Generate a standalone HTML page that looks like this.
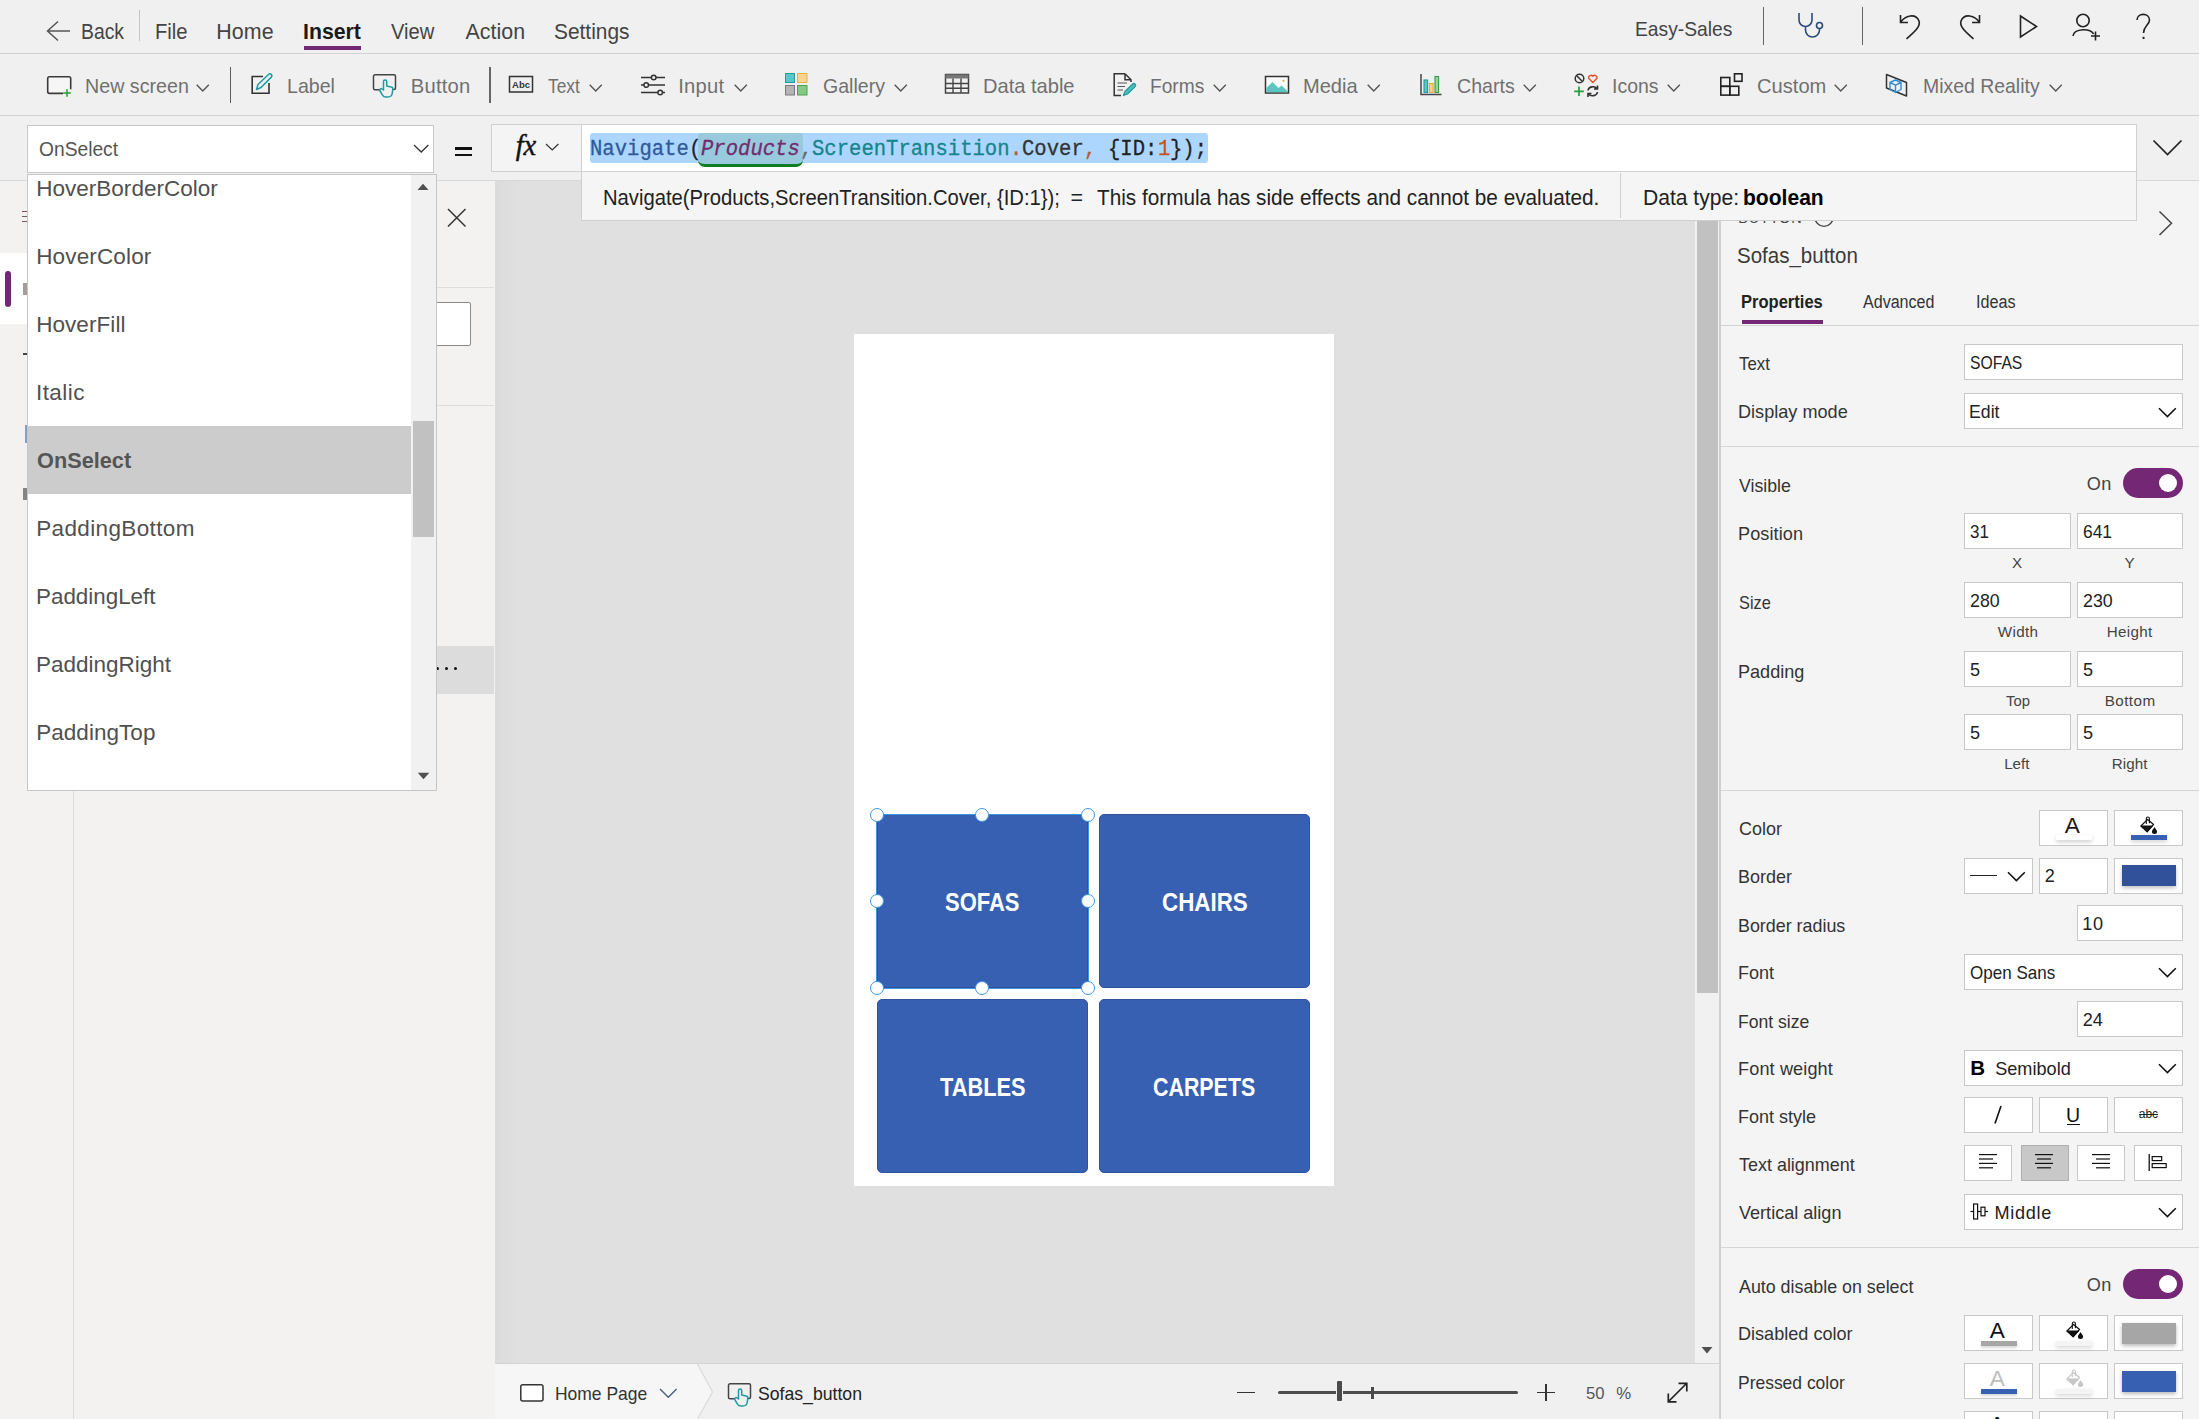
<!DOCTYPE html>
<html lang="en"><head><meta charset="utf-8"><title>Easy-Sales - Power Apps</title>
<style>
html,body{margin:0;padding:0;}
body{width:2199px;height:1419px;overflow:hidden;background:#f3f2f1;position:relative;font-family:'Liberation Sans', sans-serif;}
.a{position:absolute;box-sizing:border-box;}
.t{position:absolute;white-space:pre;line-height:1;}

</style></head><body>
<div class="a" style="left:495px;top:181px;width:1225px;height:1182px;background:#e0e0e0;"></div>
<div class="a" style="left:495px;top:181px;width:26px;height:1182px;background:linear-gradient(90deg,#dbdbdb,#e0e0e0);"></div>
<div class="a" style="left:854px;top:334px;width:480px;height:852px;background:#ffffff;"></div>
<div class="a" style="left:877px;top:814px;width:211px;height:174px;background:#3860b2;border-radius:5px;border:1px solid #2f539c;"></div>
<span class="t" style="left:945.37px;top:890.00px;font-family:'Liberation Sans', sans-serif;font-size:25px;font-weight:700;color:#fff;letter-spacing:0.000px;transform:scaleX(0.8790);transform-origin:0 0;">SOFAS</span>
<div class="a" style="left:1099px;top:814px;width:211px;height:174px;background:#3860b2;border-radius:5px;border:1px solid #2f539c;"></div>
<span class="t" style="left:1161.58px;top:890.00px;font-family:'Liberation Sans', sans-serif;font-size:25px;font-weight:700;color:#fff;letter-spacing:0.000px;transform:scaleX(0.8951);transform-origin:0 0;">CHAIRS</span>
<div class="a" style="left:877px;top:998.5px;width:211px;height:174px;background:#3860b2;border-radius:5px;border:1px solid #2f539c;"></div>
<span class="t" style="left:940.01px;top:1075.00px;font-family:'Liberation Sans', sans-serif;font-size:25px;font-weight:700;color:#fff;letter-spacing:0.000px;transform:scaleX(0.8720);transform-origin:0 0;">TABLES</span>
<div class="a" style="left:1099px;top:998.5px;width:211px;height:174px;background:#3860b2;border-radius:5px;border:1px solid #2f539c;"></div>
<span class="t" style="left:1153.37px;top:1075.00px;font-family:'Liberation Sans', sans-serif;font-size:25px;font-weight:700;color:#fff;letter-spacing:0.000px;transform:scaleX(0.8556);transform-origin:0 0;">CARPETS</span>
<div class="a" style="left:876px;top:813.5px;width:212.5px;height:175px;border:1px solid #3a96dd;background:transparent;"></div>
<div class="a" style="left:870px;top:807.5px;width:14px;height:14px;background:#fff;border:1px solid #3a96dd;border-radius:7px;"></div>
<div class="a" style="left:870px;top:894px;width:14px;height:14px;background:#fff;border:1px solid #3a96dd;border-radius:7px;"></div>
<div class="a" style="left:870px;top:981px;width:14px;height:14px;background:#fff;border:1px solid #3a96dd;border-radius:7px;"></div>
<div class="a" style="left:975px;top:807.5px;width:14px;height:14px;background:#fff;border:1px solid #3a96dd;border-radius:7px;"></div>
<div class="a" style="left:975px;top:981px;width:14px;height:14px;background:#fff;border:1px solid #3a96dd;border-radius:7px;"></div>
<div class="a" style="left:1080.5px;top:807.5px;width:14px;height:14px;background:#fff;border:1px solid #3a96dd;border-radius:7px;"></div>
<div class="a" style="left:1080.5px;top:894px;width:14px;height:14px;background:#fff;border:1px solid #3a96dd;border-radius:7px;"></div>
<div class="a" style="left:1080.5px;top:981px;width:14px;height:14px;background:#fff;border:1px solid #3a96dd;border-radius:7px;"></div>
<div class="a" style="left:1695px;top:181px;width:24px;height:1182px;background:#f1f1f1;"></div>
<div class="a" style="left:1697.4px;top:221px;width:20.4px;height:772px;background:#c1c1c1;"></div>
<svg class="a" style="left:1701px;top:1346px;" width="13" height="9" viewBox="0 0 13 9"><path d="M0.5 1 H11.5 L6 7.5 Z" fill="#505050"/></svg>
<div class="a" style="left:0px;top:181px;width:495px;height:1238px;background:#f3f2f1;"></div>
<div class="a" style="left:73px;top:181px;width:1px;height:1238px;background:#dcdcdc;"></div>
<div class="a" style="left:0px;top:253px;width:27px;height:71px;background:#ffffff;"></div>
<div class="a" style="left:5px;top:271px;width:5.5px;height:36px;background:#742774;border-radius:3px;"></div>
<svg class="a" style="left:446px;top:207px;" width="22" height="22" viewBox="0 0 22 22"><path d="M2 2 L19.5 19.5 M19.5 2 L2 19.5" fill="none" stroke="#333" stroke-width="1.5"/></svg>
<div class="a" style="left:437px;top:287px;width:57px;height:1px;background:#dddddd;"></div>
<div class="a" style="left:420px;top:302px;width:50.5px;height:44px;background:#fff;border:1px solid #8a8a8a;border-radius:2px;"></div>
<div class="a" style="left:437px;top:405px;width:57px;height:1px;background:#dddddd;"></div>
<div class="a" style="left:437px;top:646px;width:57px;height:47.7px;background:#dcdcdc;"></div>
<div class="a" style="left:435.5px;top:666.5px;width:3px;height:3px;background:#111;border-radius:1.5px;"></div>
<div class="a" style="left:444.5px;top:666.5px;width:3px;height:3px;background:#111;border-radius:1.5px;"></div>
<div class="a" style="left:453.5px;top:666.5px;width:3px;height:3px;background:#111;border-radius:1.5px;"></div>
<div class="a" style="left:22px;top:211px;width:5px;height:1.2px;background:#7a5a5a;"></div>
<div class="a" style="left:22px;top:216px;width:5px;height:1.2px;background:#7a5a5a;"></div>
<div class="a" style="left:22px;top:221px;width:5px;height:1.2px;background:#7a5a5a;"></div>
<div class="a" style="left:23px;top:283px;width:4px;height:12px;background:#6a5a5a;opacity:.6;"></div>
<div class="a" style="left:23px;top:353px;width:4px;height:1.5px;background:#444;"></div>
<div class="a" style="left:23px;top:488px;width:4px;height:12px;background:#555;opacity:.7;"></div>
<div class="a" style="left:25px;top:425px;width:2px;height:18px;background:#4a80c0;opacity:.7;"></div>
<div class="a" style="left:1719px;top:181px;width:480px;height:1238px;background:#f4f4f4;border-left:2px solid #cfcfcf;"></div>
<span class="t" style="left:1738.31px;top:211.00px;font-family:'Liberation Sans', sans-serif;font-size:14.5px;font-weight:400;color:#444;letter-spacing:0.802px;">BUTTON</span>
<svg class="a" style="left:1813.3px;top:205.6px;" width="22" height="22" viewBox="0 0 22 22"><circle cx="11" cy="11" r="9.3" fill="none" stroke="#444" stroke-width="1.3"/></svg>
<svg class="a" style="left:2158px;top:210px;" width="16" height="27" viewBox="0 0 16 27"><path d="M1.5 1.5 L13.5 13.2 L1.5 25" fill="none" stroke="#444" stroke-width="1.5"/></svg>
<span class="t" style="left:1737.27px;top:245.00px;font-family:'Liberation Sans', sans-serif;font-size:21.2px;font-weight:400;color:#3a3a3a;letter-spacing:0.000px;transform:scaleX(0.9679);transform-origin:0 0;">Sofas_button</span>
<span class="t" style="left:1741.29px;top:293.00px;font-family:'Liberation Sans', sans-serif;font-size:18px;font-weight:700;color:#222;letter-spacing:0.000px;transform:scaleX(0.9184);transform-origin:0 0;">Properties</span>
<div class="a" style="left:1742px;top:320px;width:81px;height:4px;background:#742774;"></div>
<span class="t" style="left:1862.57px;top:293.00px;font-family:'Liberation Sans', sans-serif;font-size:18px;font-weight:400;color:#333;letter-spacing:0.000px;transform:scaleX(0.8926);transform-origin:0 0;">Advanced</span>
<span class="t" style="left:1976.31px;top:293.00px;font-family:'Liberation Sans', sans-serif;font-size:18px;font-weight:400;color:#333;letter-spacing:0.000px;transform:scaleX(0.8985);transform-origin:0 0;">Ideas</span>
<div class="a" style="left:1721px;top:324.5px;width:478px;height:1.3px;background:#d2d2d2;"></div>
<span class="t" style="left:1739.12px;top:355.00px;font-family:'Liberation Sans', sans-serif;font-size:18.1px;font-weight:400;color:#333333;letter-spacing:0.000px;transform:scaleX(0.9281);transform-origin:0 0;">Text</span>
<div class="a" style="left:1964px;top:344px;width:219px;height:36px;background:#fff;border:1px solid #c8c8c8;"></div>
<span class="t" style="left:1969.89px;top:354.00px;font-family:'Liberation Sans', sans-serif;font-size:18.1px;font-weight:400;color:#222;letter-spacing:0.000px;transform:scaleX(0.8673);transform-origin:0 0;">SOFAS</span>
<span class="t" style="left:1738.02px;top:403.00px;font-family:'Liberation Sans', sans-serif;font-size:18.1px;font-weight:400;color:#333333;letter-spacing:0.006px;">Display mode</span>
<div class="a" style="left:1964px;top:393px;width:219px;height:36px;background:#fff;border:1px solid #c8c8c8;"></div>
<span class="t" style="left:1969.15px;top:403.00px;font-family:'Liberation Sans', sans-serif;font-size:18.1px;font-weight:400;color:#222;letter-spacing:0.000px;transform:scaleX(0.9773);transform-origin:0 0;">Edit</span>
<svg class="a" style="left:2157.5px;top:406.5px;" width="20" height="12" viewBox="0 0 20 12"><path d="M1 1.2 L9.4 9.6 L17.8 1.2" fill="none" stroke="#111" stroke-width="1.5"/></svg>
<div class="a" style="left:1721px;top:446px;width:478px;height:1.2px;background:#d6d6d6;"></div>
<span class="t" style="left:1739.42px;top:477.00px;font-family:'Liberation Sans', sans-serif;font-size:18.1px;font-weight:400;color:#333333;letter-spacing:0.000px;transform:scaleX(0.9770);transform-origin:0 0;">Visible</span>
<span class="t" style="left:2086.74px;top:475.00px;font-family:'Liberation Sans', sans-serif;font-size:18.1px;font-weight:400;color:#444;letter-spacing:0.492px;">On</span>
<div class="a" style="left:2123.2px;top:468.4px;width:59.5px;height:29.6px;background:#742774;border-radius:15px;"></div>
<div class="a" style="left:2159.2px;top:474.4px;width:17.6px;height:17.6px;background:#fff;border-radius:9px;"></div>
<span class="t" style="left:1738.02px;top:525.00px;font-family:'Liberation Sans', sans-serif;font-size:18.1px;font-weight:400;color:#333333;letter-spacing:0.098px;">Position</span>
<div class="a" style="left:1964px;top:513px;width:107px;height:36px;background:#fff;border:1px solid #c8c8c8;"></div>
<span class="t" style="left:1969.95px;top:523.00px;font-family:'Liberation Sans', sans-serif;font-size:18.1px;font-weight:400;color:#222;letter-spacing:0.000px;transform:scaleX(0.9371);transform-origin:0 0;">31</span>
<div class="a" style="left:2077px;top:513px;width:106px;height:36px;background:#fff;border:1px solid #c8c8c8;"></div>
<span class="t" style="left:2082.72px;top:523.00px;font-family:'Liberation Sans', sans-serif;font-size:18.1px;font-weight:400;color:#222;letter-spacing:0.000px;transform:scaleX(0.9613);transform-origin:0 0;">641</span>
<span class="t" style="left:2012.12px;top:555.00px;font-family:'Liberation Sans', sans-serif;font-size:15.2px;font-weight:400;color:#444;letter-spacing:0.000px;">X</span>
<span class="t" style="left:2124.53px;top:555.00px;font-family:'Liberation Sans', sans-serif;font-size:15.2px;font-weight:400;color:#444;letter-spacing:0.000px;">Y</span>
<span class="t" style="left:1738.76px;top:594.00px;font-family:'Liberation Sans', sans-serif;font-size:18.1px;font-weight:400;color:#333333;letter-spacing:0.000px;transform:scaleX(0.9024);transform-origin:0 0;">Size</span>
<div class="a" style="left:1964px;top:582px;width:107px;height:36px;background:#fff;border:1px solid #c8c8c8;"></div>
<span class="t" style="left:1969.71px;top:592.00px;font-family:'Liberation Sans', sans-serif;font-size:18.1px;font-weight:400;color:#222;letter-spacing:0.000px;transform:scaleX(0.9830);transform-origin:0 0;">280</span>
<div class="a" style="left:2077px;top:582px;width:106px;height:36px;background:#fff;border:1px solid #c8c8c8;"></div>
<span class="t" style="left:2082.71px;top:592.00px;font-family:'Liberation Sans', sans-serif;font-size:18.1px;font-weight:400;color:#222;letter-spacing:0.000px;transform:scaleX(0.9830);transform-origin:0 0;">230</span>
<span class="t" style="left:1997.83px;top:624.00px;font-family:'Liberation Sans', sans-serif;font-size:15.2px;font-weight:400;color:#444;letter-spacing:0.306px;">Width</span>
<span class="t" style="left:2106.75px;top:624.00px;font-family:'Liberation Sans', sans-serif;font-size:15.2px;font-weight:400;color:#444;letter-spacing:0.290px;">Height</span>
<span class="t" style="left:1738.02px;top:663.00px;font-family:'Liberation Sans', sans-serif;font-size:18.1px;font-weight:400;color:#333333;letter-spacing:0.000px;transform:scaleX(0.9991);transform-origin:0 0;">Padding</span>
<div class="a" style="left:1964px;top:651px;width:107px;height:36px;background:#fff;border:1px solid #c8c8c8;"></div>
<span class="t" style="left:1969.88px;top:661.00px;font-family:'Liberation Sans', sans-serif;font-size:18.1px;font-weight:400;color:#222;letter-spacing:0.000px;">5</span>
<div class="a" style="left:2077px;top:651px;width:106px;height:36px;background:#fff;border:1px solid #c8c8c8;"></div>
<span class="t" style="left:2082.88px;top:661.00px;font-family:'Liberation Sans', sans-serif;font-size:18.1px;font-weight:400;color:#222;letter-spacing:0.000px;">5</span>
<span class="t" style="left:2005.67px;top:693.00px;font-family:'Liberation Sans', sans-serif;font-size:15.2px;font-weight:400;color:#444;letter-spacing:0.000px;transform:scaleX(0.9779);transform-origin:0 0;">Top</span>
<span class="t" style="left:2104.65px;top:693.00px;font-family:'Liberation Sans', sans-serif;font-size:15.2px;font-weight:400;color:#444;letter-spacing:0.465px;">Bottom</span>
<div class="a" style="left:1964px;top:714px;width:107px;height:36px;background:#fff;border:1px solid #c8c8c8;"></div>
<span class="t" style="left:1969.88px;top:724.00px;font-family:'Liberation Sans', sans-serif;font-size:18.1px;font-weight:400;color:#222;letter-spacing:0.000px;">5</span>
<div class="a" style="left:2077px;top:714px;width:106px;height:36px;background:#fff;border:1px solid #c8c8c8;"></div>
<span class="t" style="left:2082.88px;top:724.00px;font-family:'Liberation Sans', sans-serif;font-size:18.1px;font-weight:400;color:#222;letter-spacing:0.000px;">5</span>
<span class="t" style="left:2004.15px;top:756.00px;font-family:'Liberation Sans', sans-serif;font-size:15.2px;font-weight:400;color:#444;letter-spacing:0.005px;">Left</span>
<span class="t" style="left:2111.80px;top:756.00px;font-family:'Liberation Sans', sans-serif;font-size:15.2px;font-weight:400;color:#444;letter-spacing:0.047px;">Right</span>
<div class="a" style="left:1721px;top:790px;width:478px;height:1.2px;background:#d6d6d6;"></div>
<span class="t" style="left:1738.59px;top:820.00px;font-family:'Liberation Sans', sans-serif;font-size:18.1px;font-weight:400;color:#333333;letter-spacing:0.000px;transform:scaleX(0.9945);transform-origin:0 0;">Color</span>
<div class="a" style="left:2039px;top:810px;width:69px;height:36px;background:#fff;border:1px solid #c8c8c8;"></div>
<span class="t" style="left:2064.66px;top:815.00px;font-family:'Liberation Sans', sans-serif;font-size:22.6px;font-weight:400;color:#1a1a1a;letter-spacing:0.000px;">A</span>
<div class="a" style="left:2056px;top:835px;width:36px;height:5px;background:#fff;box-shadow:0 2px 4px rgba(0,0,0,.2);"></div>
<div class="a" style="left:2114px;top:810px;width:69px;height:36px;background:#fff;border:1px solid #c8c8c8;"></div>
<svg class="a" style="left:2140.3px;top:815.6px;" width="18" height="18" viewBox="0 0 18 18"><g opacity="1"><path d="M6.3 8 V2.6 a1.55 1.55 0 0 1 3.1 0 V7.2" fill="none" stroke="#111" stroke-width="1.1"/><path d="M0.9 10 L7.6 3.4 L13.6 8.4 L7.2 15.8 Z" fill="none" stroke="#111" stroke-width="1.25" stroke-linejoin="round"/><path d="M0.9 10 H12.4 L7.2 15.8 Z" fill="#111" stroke="#111" stroke-width="1" stroke-linejoin="round"/><path d="M14.5 10.9 C15.4 12.6 17.1 14.2 17.1 15.5 a2.6 2.5 0 0 1 -5.2 0 C11.9 14.2 13.6 12.6 14.5 10.9 Z" fill="#111"/></g></svg>
<div class="a" style="left:2131px;top:835px;width:36px;height:5px;background:#3860b2;box-shadow:0 2px 4px rgba(0,0,0,.18);"></div>
<span class="t" style="left:1738.02px;top:868.00px;font-family:'Liberation Sans', sans-serif;font-size:18.1px;font-weight:400;color:#333333;letter-spacing:0.000px;transform:scaleX(0.9938);transform-origin:0 0;">Border</span>
<div class="a" style="left:1964px;top:858px;width:69px;height:36px;background:#fff;border:1px solid #c8c8c8;"></div>
<div class="a" style="left:1970px;top:875px;width:27px;height:1.2px;background:#222;"></div>
<svg class="a" style="left:2007px;top:870.5px;" width="20" height="12" viewBox="0 0 20 12"><path d="M1 1.2 L9.4 9.6 L17.8 1.2" fill="none" stroke="#111" stroke-width="1.5"/></svg>
<div class="a" style="left:2039px;top:858px;width:69px;height:36px;background:#fff;border:1px solid #c8c8c8;"></div>
<span class="t" style="left:2044.69px;top:867.00px;font-family:'Liberation Sans', sans-serif;font-size:18.1px;font-weight:400;color:#222;letter-spacing:0.000px;">2</span>
<div class="a" style="left:2114px;top:858px;width:69px;height:36px;background:#fff;border:1px solid #c8c8c8;"></div>
<div class="a" style="left:2122px;top:865px;width:54px;height:21px;background:#31529a;box-shadow:0 2px 4px rgba(0,0,0,.25);"></div>
<span class="t" style="left:1738.03px;top:917.00px;font-family:'Liberation Sans', sans-serif;font-size:18.1px;font-weight:400;color:#333333;letter-spacing:0.000px;transform:scaleX(0.9879);transform-origin:0 0;">Border radius</span>
<div class="a" style="left:2077px;top:905px;width:106px;height:36px;background:#fff;border:1px solid #c8c8c8;"></div>
<span class="t" style="left:2082.22px;top:915.00px;font-family:'Liberation Sans', sans-serif;font-size:18.1px;font-weight:400;color:#222;letter-spacing:0.645px;">10</span>
<span class="t" style="left:1738.02px;top:964.00px;font-family:'Liberation Sans', sans-serif;font-size:18.1px;font-weight:400;color:#333333;letter-spacing:0.000px;transform:scaleX(0.9971);transform-origin:0 0;">Font</span>
<div class="a" style="left:1964px;top:954px;width:219px;height:36px;background:#fff;border:1px solid #c8c8c8;"></div>
<span class="t" style="left:1969.79px;top:964.00px;font-family:'Liberation Sans', sans-serif;font-size:18.1px;font-weight:400;color:#222;letter-spacing:0.000px;transform:scaleX(0.9414);transform-origin:0 0;">Open Sans</span>
<svg class="a" style="left:2157.5px;top:966.5px;" width="20" height="12" viewBox="0 0 20 12"><path d="M1 1.2 L9.4 9.6 L17.8 1.2" fill="none" stroke="#111" stroke-width="1.5"/></svg>
<span class="t" style="left:1738.06px;top:1013.00px;font-family:'Liberation Sans', sans-serif;font-size:18.1px;font-weight:400;color:#333333;letter-spacing:0.000px;transform:scaleX(0.9714);transform-origin:0 0;">Font size</span>
<div class="a" style="left:2077px;top:1001px;width:106px;height:36px;background:#fff;border:1px solid #c8c8c8;"></div>
<span class="t" style="left:2082.69px;top:1011.00px;font-family:'Liberation Sans', sans-serif;font-size:18.1px;font-weight:400;color:#222;letter-spacing:0.000px;transform:scaleX(1.0000);transform-origin:0 0;">24</span>
<span class="t" style="left:1738.02px;top:1060.00px;font-family:'Liberation Sans', sans-serif;font-size:18.1px;font-weight:400;color:#333333;letter-spacing:0.127px;">Font weight</span>
<div class="a" style="left:1964px;top:1050px;width:219px;height:36px;background:#fff;border:1px solid #c8c8c8;"></div>
<span class="t" style="left:1995.18px;top:1060.00px;font-family:'Liberation Sans', sans-serif;font-size:18.1px;font-weight:400;color:#222;letter-spacing:0.022px;">Semibold</span>
<span class="t" style="left:1970.13px;top:1058.00px;font-family:'Liberation Sans', sans-serif;font-size:20.5px;font-weight:700;color:#000;letter-spacing:0.000px;">B</span>
<svg class="a" style="left:2157.5px;top:1062.5px;" width="20" height="12" viewBox="0 0 20 12"><path d="M1 1.2 L9.4 9.6 L17.8 1.2" fill="none" stroke="#111" stroke-width="1.5"/></svg>
<span class="t" style="left:1738.02px;top:1108.00px;font-family:'Liberation Sans', sans-serif;font-size:18.1px;font-weight:400;color:#333333;letter-spacing:0.000px;transform:scaleX(0.9954);transform-origin:0 0;">Font style</span>
<div class="a" style="left:1964px;top:1097px;width:69px;height:36px;background:#fff;border:1px solid #c8c8c8;"></div>
<div class="a" style="left:2039px;top:1097px;width:69px;height:36px;background:#fff;border:1px solid #c8c8c8;"></div>
<div class="a" style="left:2114px;top:1097px;width:69px;height:36px;background:#fff;border:1px solid #c8c8c8;"></div>
<svg class="a" style="left:1991px;top:1104px;" width="14" height="22" viewBox="0 0 14 22"><path d="M10 2 L4 19.5" stroke="#111" stroke-width="1.6" fill="none"/></svg>
<span class="t" style="left:2065.95px;top:1106.00px;font-family:'Liberation Sans', sans-serif;font-size:19.5px;font-weight:400;color:#111;letter-spacing:0.000px;">U</span>
<div class="a" style="left:2066.5px;top:1124px;width:13px;height:1.3px;background:#111;"></div>
<span class="t" style="left:2138.72px;top:1108.00px;font-family:'Liberation Sans', sans-serif;font-size:12px;font-weight:400;color:#222;letter-spacing:0.000px;">abc</span>
<div class="a" style="left:2139px;top:1113.5px;width:19px;height:1.1px;background:#222;"></div>
<span class="t" style="left:1739.10px;top:1156.00px;font-family:'Liberation Sans', sans-serif;font-size:18.1px;font-weight:400;color:#333333;letter-spacing:0.000px;transform:scaleX(0.9920);transform-origin:0 0;">Text alignment</span>
<div class="a" style="left:1964px;top:1145px;width:48px;height:36px;background:#fff;border:1px solid #c8c8c8;"></div>
<div class="a" style="left:2021px;top:1145px;width:48px;height:36px;background:#c8c8c8;border:1px solid #b0b0b0;"></div>
<div class="a" style="left:2077px;top:1145px;width:48px;height:36px;background:#fff;border:1px solid #c8c8c8;"></div>
<div class="a" style="left:2134px;top:1145px;width:48px;height:36px;background:#fff;border:1px solid #c8c8c8;"></div>
<svg class="a" style="left:1979px;top:1154.3px;" width="18" height="16" viewBox="0 0 18 16"><rect x="0" y="0.0" width="18" height="1.2" fill="#111"/><rect x="0" y="4.4" width="14" height="1.2" fill="#111"/><rect x="0" y="8.8" width="18" height="1.2" fill="#111"/><rect x="0" y="13.200000000000001" width="14" height="1.2" fill="#111"/></svg>
<svg class="a" style="left:2035px;top:1154.3px;" width="18" height="16" viewBox="0 0 18 16"><rect x="0.0" y="0.0" width="18" height="1.2" fill="#111"/><rect x="2.0" y="4.4" width="14" height="1.2" fill="#111"/><rect x="0.0" y="8.8" width="18" height="1.2" fill="#111"/><rect x="2.0" y="13.200000000000001" width="14" height="1.2" fill="#111"/></svg>
<svg class="a" style="left:2092px;top:1154.3px;" width="18" height="16" viewBox="0 0 18 16"><rect x="0" y="0.0" width="18" height="1.2" fill="#111"/><rect x="4" y="4.4" width="14" height="1.2" fill="#111"/><rect x="0" y="8.8" width="18" height="1.2" fill="#111"/><rect x="4" y="13.200000000000001" width="14" height="1.2" fill="#111"/></svg>
<svg class="a" style="left:2148px;top:1153px;" width="20" height="20" viewBox="0 0 20 20"><path d="M1.2 1 V18" stroke="#111" stroke-width="1.3" fill="none"/><rect x="4.2" y="3.6" width="9.5" height="4" fill="none" stroke="#111" stroke-width="1.2"/><rect x="4.2" y="10.6" width="14" height="4" fill="none" stroke="#111" stroke-width="1.2"/></svg>
<span class="t" style="left:1739.42px;top:1204.00px;font-family:'Liberation Sans', sans-serif;font-size:18.1px;font-weight:400;color:#333333;letter-spacing:0.000px;transform:scaleX(0.9986);transform-origin:0 0;">Vertical align</span>
<div class="a" style="left:1964px;top:1194px;width:219px;height:36px;background:#fff;border:1px solid #c8c8c8;"></div>
<span class="t" style="left:1994.52px;top:1204.00px;font-family:'Liberation Sans', sans-serif;font-size:18.1px;font-weight:400;color:#222;letter-spacing:0.675px;">Middle</span>
<svg class="a" style="left:1970px;top:1203px;" width="19" height="18" viewBox="0 0 19 18"><path d="M0.5 8.5 H18" stroke="#111" stroke-width="1.2"/><rect x="3.6" y="1" width="4" height="15" fill="#fff" stroke="#111" stroke-width="1.2"/><rect x="11" y="4.2" width="4" height="8.6" fill="#fff" stroke="#111" stroke-width="1.2"/></svg>
<svg class="a" style="left:2157.5px;top:1206.5px;" width="20" height="12" viewBox="0 0 20 12"><path d="M1 1.2 L9.4 9.6 L17.8 1.2" fill="none" stroke="#111" stroke-width="1.5"/></svg>
<div class="a" style="left:1721px;top:1246.7px;width:478px;height:1.2px;background:#d6d6d6;"></div>
<span class="t" style="left:1739.47px;top:1278.00px;font-family:'Liberation Sans', sans-serif;font-size:18.1px;font-weight:400;color:#333333;letter-spacing:0.000px;transform:scaleX(0.9849);transform-origin:0 0;">Auto disable on select</span>
<span class="t" style="left:2086.74px;top:1276.00px;font-family:'Liberation Sans', sans-serif;font-size:18.1px;font-weight:400;color:#444;letter-spacing:0.492px;">On</span>
<div class="a" style="left:2123.2px;top:1269.2px;width:59.5px;height:29.6px;background:#742774;border-radius:15px;"></div>
<div class="a" style="left:2159.2px;top:1275.2px;width:17.6px;height:17.6px;background:#fff;border-radius:9px;"></div>
<span class="t" style="left:1738.02px;top:1325.00px;font-family:'Liberation Sans', sans-serif;font-size:18.1px;font-weight:400;color:#333333;letter-spacing:0.000px;transform:scaleX(0.9994);transform-origin:0 0;">Disabled color</span>
<div class="a" style="left:1964px;top:1315px;width:69px;height:36px;background:#fff;border:1px solid #c8c8c8;"></div>
<div class="a" style="left:2039px;top:1315px;width:69px;height:36px;background:#fff;border:1px solid #c8c8c8;"></div>
<div class="a" style="left:2114px;top:1315px;width:69px;height:36px;background:#fff;border:1px solid #c8c8c8;"></div>
<span class="t" style="left:1989.66px;top:1320.00px;font-family:'Liberation Sans', sans-serif;font-size:22.6px;font-weight:400;color:#111;letter-spacing:0.000px;">A</span>
<div class="a" style="left:1981px;top:1341.2px;width:36px;height:4.4px;background:#a6a6a6;box-shadow:0 2px 3px rgba(0,0,0,.16);"></div>
<svg class="a" style="left:2065.5px;top:1320.9px;" width="18" height="18" viewBox="0 0 18 18"><g opacity="1"><path d="M6.3 8 V2.6 a1.55 1.55 0 0 1 3.1 0 V7.2" fill="none" stroke="#111" stroke-width="1.1"/><path d="M0.9 10 L7.6 3.4 L13.6 8.4 L7.2 15.8 Z" fill="none" stroke="#111" stroke-width="1.25" stroke-linejoin="round"/><path d="M0.9 10 H12.4 L7.2 15.8 Z" fill="#111" stroke="#111" stroke-width="1" stroke-linejoin="round"/><path d="M14.5 10.9 C15.4 12.6 17.1 14.2 17.1 15.5 a2.6 2.5 0 0 1 -5.2 0 C11.9 14.2 13.6 12.6 14.5 10.9 Z" fill="#111"/></g></svg>
<div class="a" style="left:2056px;top:1341.2px;width:36px;height:4.4px;background:#f4f4f4;box-shadow:0 2px 4px rgba(0,0,0,.16);"></div>
<div class="a" style="left:2122px;top:1322.7px;width:54px;height:21px;background:#a6a6a6;box-shadow:0 2px 4px rgba(0,0,0,.28);"></div>
<span class="t" style="left:1738.07px;top:1374.00px;font-family:'Liberation Sans', sans-serif;font-size:18.1px;font-weight:400;color:#333333;letter-spacing:0.000px;transform:scaleX(0.9647);transform-origin:0 0;">Pressed color</span>
<div class="a" style="left:1964px;top:1363px;width:69px;height:36px;background:#fff;border:1px solid #c8c8c8;"></div>
<div class="a" style="left:2039px;top:1363px;width:69px;height:36px;background:#fff;border:1px solid #c8c8c8;"></div>
<div class="a" style="left:2114px;top:1363px;width:69px;height:36px;background:#fff;border:1px solid #c8c8c8;"></div>
<span class="t" style="left:1989.66px;top:1368.00px;font-family:'Liberation Sans', sans-serif;font-size:22.6px;font-weight:400;color:#bdbdbd;letter-spacing:0.000px;">A</span>
<div class="a" style="left:1981px;top:1389.3px;width:36px;height:4.4px;background:#3860b2;box-shadow:0 2px 3px rgba(0,0,0,.16);"></div>
<svg class="a" style="left:2065.5px;top:1369.0px;" width="18" height="18" viewBox="0 0 18 18"><g opacity="0.55"><path d="M6.3 8 V2.6 a1.55 1.55 0 0 1 3.1 0 V7.2" fill="none" stroke="#9a9a9a" stroke-width="1.1"/><path d="M0.9 10 L7.6 3.4 L13.6 8.4 L7.2 15.8 Z" fill="none" stroke="#9a9a9a" stroke-width="1.25" stroke-linejoin="round"/><path d="M0.9 10 H12.4 L7.2 15.8 Z" fill="#9a9a9a" stroke="#9a9a9a" stroke-width="1" stroke-linejoin="round"/><path d="M14.5 10.9 C15.4 12.6 17.1 14.2 17.1 15.5 a2.6 2.5 0 0 1 -5.2 0 C11.9 14.2 13.6 12.6 14.5 10.9 Z" fill="#9a9a9a"/></g></svg>
<div class="a" style="left:2056px;top:1389.3px;width:36px;height:4.4px;background:#f4f4f4;box-shadow:0 2px 4px rgba(0,0,0,.16);"></div>
<div class="a" style="left:2122px;top:1370.8px;width:54px;height:21px;background:#3860b2;box-shadow:0 2px 4px rgba(0,0,0,.28);"></div>
<div class="a" style="left:1964.2px;top:1411.4px;width:68.7px;height:20px;background:#fff;border:1px solid #c8c8c8;"></div>
<div class="a" style="left:2039px;top:1411.4px;width:68.7px;height:20px;background:#fff;border:1px solid #c8c8c8;"></div>
<div class="a" style="left:2114px;top:1411.4px;width:68.7px;height:20px;background:#fff;border:1px solid #c8c8c8;"></div>
<span class="t" style="left:1989.33px;top:1415.00px;font-family:'Liberation Sans', sans-serif;font-size:23.6px;font-weight:400;color:#111;letter-spacing:0.000px;">A</span>
<div class="a" style="left:495px;top:1363px;width:1225px;height:56px;background:#f0f0f0;border-top:1px solid #d4d4d4;border-right:1px solid #d4d4d4;"></div>
<svg class="a" style="left:495px;top:1364px;" width="222" height="55" viewBox="0 0 222 55"><path d="M0 0 H202.5 L217.5 28 L202.5 55 H0 Z" fill="#f6f6f6"/><path d="M202.5 0 L217.5 28 L202.5 55" fill="none" stroke="#dadada" stroke-width="1.2"/></svg>
<svg class="a" style="left:519px;top:1383px;" width="28" height="22" viewBox="0 0 28 22"><rect x="1.8" y="1.8" width="22.2" height="16.2" rx="2" fill="#fff" stroke="#333" stroke-width="1.5"/></svg>
<span class="t" style="left:555.07px;top:1385.00px;font-family:'Liberation Sans', sans-serif;font-size:18.4px;font-weight:400;color:#333;letter-spacing:0.000px;transform:scaleX(0.9494);transform-origin:0 0;">Home Page</span>
<svg class="a" style="left:659px;top:1388px;" width="20" height="12" viewBox="0 0 20 12"><path d="M1 1 L9.3 9.3 L17.6 1" fill="none" stroke="#4a5f78" stroke-width="1.4"/></svg>
<svg class="a" style="left:726.5px;top:1381.5px;" width="28" height="26" viewBox="0 0 28 26"><path d="M8 16.8 H3 a1.5 1.5 0 0 1 -1.5 -1.5 V3.3 a1.5 1.5 0 0 1 1.5 -1.5 H22 a1.5 1.5 0 0 1 1.5 1.5 V15 a1.5 1.5 0 0 1 -1.5 1.5 H21" fill="none" stroke="#444" stroke-width="1.5"/><path d="M11.5 17 V8.5 a1.6 1.6 0 0 1 3.2 0 V13 l4.5 1 a2 2 0 0 1 1.6 2.2 l-0.5 3.8 a4.5 4.5 0 0 1 -4.5 4 h-1.5 a4.5 4.5 0 0 1 -4 -2.2 L7.8 17.5 a1.4 1.4 0 0 1 2.3 -1.5 Z" fill="#f0f0f0" stroke="#1e9aa0" stroke-width="1.5" stroke-linejoin="round"/></svg>
<span class="t" style="left:758.30px;top:1385.00px;font-family:'Liberation Sans', sans-serif;font-size:18.4px;font-weight:400;color:#222;letter-spacing:0.000px;transform:scaleX(0.9590);transform-origin:0 0;">Sofas_button</span>
<div class="a" style="left:1236.5px;top:1391.5px;width:18px;height:1.5px;background:#333;"></div>
<div class="a" style="left:1278px;top:1390.5px;width:240px;height:3.2px;background:#4d4d4d;border-radius:1.5px;"></div>
<div class="a" style="left:1336px;top:1380.5px;width:7px;height:21px;background:#f0f0f0;"></div>
<div class="a" style="left:1337px;top:1381px;width:5px;height:20px;background:#4a4a4a;border-radius:1px;"></div>
<div class="a" style="left:1370.5px;top:1387px;width:3.3px;height:11.5px;background:#4a4a4a;"></div>
<div class="a" style="left:1537px;top:1391.7px;width:17.5px;height:1.5px;background:#333;"></div>
<div class="a" style="left:1545px;top:1384px;width:1.5px;height:17px;background:#333;"></div>
<span class="t" style="left:1586.43px;top:1386.00px;font-family:'Liberation Sans', sans-serif;font-size:16.8px;font-weight:400;color:#555;letter-spacing:0.000px;transform:scaleX(0.9918);transform-origin:0 0;">50</span>
<span class="t" style="left:1616.20px;top:1386.00px;font-family:'Liberation Sans', sans-serif;font-size:16.8px;font-weight:400;color:#555;letter-spacing:0.000px;">%</span>
<svg class="a" style="left:1665px;top:1380px;" width="26" height="26" viewBox="0 0 26 26"><path d="M3.5 21.5 L21.5 3.5 M13.5 3.3 H21.8 V11.5 M3.3 13.5 V21.8 H11.5" fill="none" stroke="#222" stroke-width="1.7"/></svg>
<div class="a" style="left:0px;top:0px;width:2199px;height:54px;background:#f0f0f0;border-bottom:1px solid #d2d2d2;"></div>
<svg class="a" style="left:46px;top:20px;" width="25" height="22" viewBox="0 0 25 22"><path d="M12 1.5 L1.5 11 L12 20.5 M1.5 11 H24" fill="none" stroke="#555" stroke-width="1.5"/></svg>
<span class="t" style="left:80.91px;top:22.00px;font-family:'Liberation Sans', sans-serif;font-size:21.4px;font-weight:400;color:#444;letter-spacing:0.000px;transform:scaleX(0.9054);transform-origin:0 0;">Back</span>
<div class="a" style="left:139px;top:10px;width:1px;height:31px;background:#c4c4c4;"></div>
<span class="t" style="left:155.04px;top:22.00px;font-family:'Liberation Sans', sans-serif;font-size:21.4px;font-weight:400;color:#444;letter-spacing:0.000px;transform:scaleX(0.9445);transform-origin:0 0;">File</span>
<span class="t" style="left:216.24px;top:22.00px;font-family:'Liberation Sans', sans-serif;font-size:21.4px;font-weight:400;color:#444;letter-spacing:0.115px;">Home</span>
<span class="t" style="left:302.58px;top:22.00px;font-family:'Liberation Sans', sans-serif;font-size:21.4px;font-weight:700;color:#1a1a1a;letter-spacing:0.000px;transform:scaleX(0.9937);transform-origin:0 0;">Insert</span>
<div class="a" style="left:304px;top:46px;width:57px;height:4px;background:#742774;"></div>
<span class="t" style="left:391.11px;top:22.00px;font-family:'Liberation Sans', sans-serif;font-size:21.4px;font-weight:400;color:#444;letter-spacing:0.000px;transform:scaleX(0.9425);transform-origin:0 0;">View</span>
<span class="t" style="left:465.46px;top:22.00px;font-family:'Liberation Sans', sans-serif;font-size:21.4px;font-weight:400;color:#444;letter-spacing:0.056px;">Action</span>
<span class="t" style="left:554.25px;top:22.00px;font-family:'Liberation Sans', sans-serif;font-size:21.4px;font-weight:400;color:#444;letter-spacing:0.000px;transform:scaleX(0.9768);transform-origin:0 0;">Settings</span>
<span class="t" style="left:1635.42px;top:18.00px;font-family:'Liberation Sans', sans-serif;font-size:21px;font-weight:400;color:#444;letter-spacing:0.000px;transform:scaleX(0.9158);transform-origin:0 0;">Easy-Sales</span>
<div class="a" style="left:1763px;top:7px;width:1px;height:38px;background:#666;"></div>
<div class="a" style="left:1862px;top:7px;width:1px;height:38px;background:#666;"></div>
<svg class="a" style="left:1796px;top:10px;" width="32" height="32" viewBox="0 0 32 32"><path d="M3 3 V10 a6.5 6.5 0 0 0 13 0 V3 M9.5 16.5 V20 a7 7 0 0 0 14 0 V18.5" fill="none" stroke="#2b4a7a" stroke-width="1.6"/><circle cx="23.5" cy="15.5" r="3" fill="none" stroke="#2b4a7a" stroke-width="1.6"/></svg>
<svg class="a" style="left:1898px;top:12px;" width="26" height="30" viewBox="0 0 26 30"><path d="M2.5 3 V10.5 H10 M2.5 10.5 C7 3, 18 1, 21 9 C23 15, 15 21, 8.5 27" fill="none" stroke="#222" stroke-width="1.6"/></svg>
<svg class="a" style="left:1956px;top:12px;" width="26" height="30" viewBox="0 0 26 30"><path d="M23.5 3 V10.5 H16 M23.5 10.5 C19 3, 8 1, 5 9 C3 15, 11 21, 17.5 27" fill="none" stroke="#222" stroke-width="1.6"/></svg>
<svg class="a" style="left:2018px;top:14px;" width="22" height="26" viewBox="0 0 22 26"><path d="M2.5 2 L18.5 12.5 L2.5 23 Z" fill="none" stroke="#222" stroke-width="1.6" stroke-linejoin="miter"/></svg>
<svg class="a" style="left:2071px;top:12px;" width="32" height="30" viewBox="0 0 32 30"><circle cx="12" cy="8.5" r="6.2" fill="none" stroke="#222" stroke-width="1.6"/><path d="M2 24 C3 16, 21 16, 22.5 22" fill="none" stroke="#222" stroke-width="1.6"/><path d="M24.5 19.5 V28.5 M20 24 H29" fill="none" stroke="#222" stroke-width="1.6"/></svg>
<svg class="a" style="left:2134px;top:12px;" width="20" height="30" viewBox="0 0 20 30"><path d="M3 8 C3 0.5, 15.5 0.5, 15.5 8 C15.5 13, 9.5 14, 9.5 21" fill="none" stroke="#222" stroke-width="1.6"/><rect x="8.6" y="24.8" width="1.9" height="2.2" fill="#222"/></svg>
<div class="a" style="left:0px;top:54px;width:2199px;height:62px;background:#f0f0f0;border-bottom:1px solid #d2d2d2;"></div>
<span class="t" style="left:84.88px;top:76.00px;font-family:'Liberation Sans', sans-serif;font-size:20.2px;font-weight:400;color:#707070;letter-spacing:0.000px;transform:scaleX(0.9747);transform-origin:0 0;">New screen</span>
<svg class="a" style="left:196px;top:83.5px;" width="13.5" height="9" viewBox="0 0 13.5 9"><path d="M0.7 0.7 L6.75 7 L12.8 0.7" fill="none" stroke="#555" stroke-width="1.4"/></svg>
<span class="t" style="left:287.39px;top:76.00px;font-family:'Liberation Sans', sans-serif;font-size:20.2px;font-weight:400;color:#707070;letter-spacing:0.000px;transform:scaleX(0.9699);transform-origin:0 0;">Label</span>
<span class="t" style="left:410.84px;top:76.00px;font-family:'Liberation Sans', sans-serif;font-size:20.2px;font-weight:400;color:#707070;letter-spacing:0.219px;">Button</span>
<span class="t" style="left:548.31px;top:76.00px;font-family:'Liberation Sans', sans-serif;font-size:20.2px;font-weight:400;color:#707070;letter-spacing:0.000px;transform:scaleX(0.8592);transform-origin:0 0;">Text</span>
<svg class="a" style="left:589px;top:83.5px;" width="13.5" height="9" viewBox="0 0 13.5 9"><path d="M0.7 0.7 L6.75 7 L12.8 0.7" fill="none" stroke="#555" stroke-width="1.4"/></svg>
<span class="t" style="left:678.14px;top:76.00px;font-family:'Liberation Sans', sans-serif;font-size:20.2px;font-weight:400;color:#707070;letter-spacing:0.276px;">Input</span>
<svg class="a" style="left:734px;top:83.5px;" width="13.5" height="9" viewBox="0 0 13.5 9"><path d="M0.7 0.7 L6.75 7 L12.8 0.7" fill="none" stroke="#555" stroke-width="1.4"/></svg>
<span class="t" style="left:823.01px;top:76.00px;font-family:'Liberation Sans', sans-serif;font-size:20.2px;font-weight:400;color:#707070;letter-spacing:0.000px;transform:scaleX(0.9698);transform-origin:0 0;">Gallery</span>
<svg class="a" style="left:894px;top:83.5px;" width="13.5" height="9" viewBox="0 0 13.5 9"><path d="M0.7 0.7 L6.75 7 L12.8 0.7" fill="none" stroke="#555" stroke-width="1.4"/></svg>
<span class="t" style="left:983.35px;top:76.00px;font-family:'Liberation Sans', sans-serif;font-size:20.2px;font-weight:400;color:#707070;letter-spacing:0.000px;transform:scaleX(0.9947);transform-origin:0 0;">Data table</span>
<span class="t" style="left:1150.43px;top:76.00px;font-family:'Liberation Sans', sans-serif;font-size:20.2px;font-weight:400;color:#707070;letter-spacing:0.000px;transform:scaleX(0.9486);transform-origin:0 0;">Forms</span>
<svg class="a" style="left:1213px;top:83.5px;" width="13.5" height="9" viewBox="0 0 13.5 9"><path d="M0.7 0.7 L6.75 7 L12.8 0.7" fill="none" stroke="#555" stroke-width="1.4"/></svg>
<span class="t" style="left:1302.85px;top:76.00px;font-family:'Liberation Sans', sans-serif;font-size:20.2px;font-weight:400;color:#707070;letter-spacing:0.000px;transform:scaleX(0.9939);transform-origin:0 0;">Media</span>
<svg class="a" style="left:1367px;top:83.5px;" width="13.5" height="9" viewBox="0 0 13.5 9"><path d="M0.7 0.7 L6.75 7 L12.8 0.7" fill="none" stroke="#555" stroke-width="1.4"/></svg>
<span class="t" style="left:1457.00px;top:76.00px;font-family:'Liberation Sans', sans-serif;font-size:20.2px;font-weight:400;color:#707070;letter-spacing:0.000px;transform:scaleX(0.9703);transform-origin:0 0;">Charts</span>
<svg class="a" style="left:1523px;top:83.5px;" width="13.5" height="9" viewBox="0 0 13.5 9"><path d="M0.7 0.7 L6.75 7 L12.8 0.7" fill="none" stroke="#555" stroke-width="1.4"/></svg>
<span class="t" style="left:1612.20px;top:76.00px;font-family:'Liberation Sans', sans-serif;font-size:20.2px;font-weight:400;color:#707070;letter-spacing:0.000px;transform:scaleX(0.9634);transform-origin:0 0;">Icons</span>
<svg class="a" style="left:1667px;top:83.5px;" width="13.5" height="9" viewBox="0 0 13.5 9"><path d="M0.7 0.7 L6.75 7 L12.8 0.7" fill="none" stroke="#555" stroke-width="1.4"/></svg>
<span class="t" style="left:1756.98px;top:76.00px;font-family:'Liberation Sans', sans-serif;font-size:20.2px;font-weight:400;color:#707070;letter-spacing:0.000px;transform:scaleX(0.9969);transform-origin:0 0;">Custom</span>
<svg class="a" style="left:1834px;top:83.5px;" width="13.5" height="9" viewBox="0 0 13.5 9"><path d="M0.7 0.7 L6.75 7 L12.8 0.7" fill="none" stroke="#555" stroke-width="1.4"/></svg>
<span class="t" style="left:1923.11px;top:76.00px;font-family:'Liberation Sans', sans-serif;font-size:20.2px;font-weight:400;color:#707070;letter-spacing:0.000px;transform:scaleX(0.9625);transform-origin:0 0;">Mixed Reality</span>
<svg class="a" style="left:2048.5px;top:83.5px;" width="13.5" height="9" viewBox="0 0 13.5 9"><path d="M0.7 0.7 L6.75 7 L12.8 0.7" fill="none" stroke="#555" stroke-width="1.4"/></svg>
<div class="a" style="left:230px;top:67px;width:1.2px;height:36px;background:#5c5c5c;"></div>
<div class="a" style="left:489px;top:67px;width:1.8px;height:36px;background:#666;"></div>
<svg class="a" style="left:46px;top:75px;" width="28" height="24" viewBox="0 0 28 24"><rect x="1.7" y="1.8" width="23" height="16.6" rx="1.8" fill="#f6f6f6" stroke="#3a3a3a" stroke-width="1.6"/><rect x="17" y="14.2" width="10" height="9" fill="#f0f0f0"/><path d="M21 14.2 V21.8 M17.2 18 H24.8" stroke="#2a9a3a" stroke-width="1.5" fill="none"/></svg>
<svg class="a" style="left:250px;top:72px;" width="26" height="24" viewBox="0 0 26 24"><path d="M13 4.5 H2.2 V21.2 H19 V11" fill="none" stroke="#333" stroke-width="1.6"/><path d="M6.5 17.5 L8 12.5 L18.5 2.5 a1.8 1.8 0 0 1 2.8 2.6 L11 15.5 Z" fill="#f0f0f0" stroke="#1e9aa0" stroke-width="1.5" stroke-linejoin="round"/></svg>
<svg class="a" style="left:372px;top:73px;" width="28" height="26" viewBox="0 0 28 26"><path d="M8 16.8 H3 a1.5 1.5 0 0 1 -1.5 -1.5 V3.3 a1.5 1.5 0 0 1 1.5 -1.5 H22 a1.5 1.5 0 0 1 1.5 1.5 V15 a1.5 1.5 0 0 1 -1.5 1.5 H21" fill="none" stroke="#444" stroke-width="1.5"/><path d="M11.5 17 V8.5 a1.6 1.6 0 0 1 3.2 0 V13 l4.5 1 a2 2 0 0 1 1.6 2.2 l-0.5 3.8 a4.5 4.5 0 0 1 -4.5 4 h-1.5 a4.5 4.5 0 0 1 -4 -2.2 L7.8 17.5 a1.4 1.4 0 0 1 2.3 -1.5 Z" fill="#f0f0f0" stroke="#1e9aa0" stroke-width="1.5" stroke-linejoin="round"/></svg>
<svg class="a" style="left:508px;top:75px;" width="26" height="19" viewBox="0 0 26 19"><rect x="1.5" y="1.5" width="23" height="15.5" fill="none" stroke="#333" stroke-width="1.5"/><text x="13" y="13.2" font-family="Liberation Sans, sans-serif" font-size="9.5" font-weight="700" text-anchor="middle" fill="#333">Abc</text></svg>
<svg class="a" style="left:640px;top:73px;" width="26" height="24" viewBox="0 0 26 24"><g fill="none" stroke="#333" stroke-width="1.5"><path d="M1 4.5 H11.5 M16 4.5 H25"/><circle cx="13.7" cy="4.5" r="2.3"/><path d="M1 12 H4 M8.5 12 H25"/><circle cx="6.2" cy="12" r="2.3"/><path d="M1 19.5 H18 M22.5 19.5 H25"/><circle cx="20.2" cy="19.5" r="2.3"/></g></svg>
<svg class="a" style="left:784px;top:72px;" width="25" height="25" viewBox="0 0 25 25"><rect x="1.5" y="1.5" width="9" height="9" fill="#5cc5c8" stroke="#2a9a9e" stroke-width="1"/><rect x="13.5" y="1.5" width="9.5" height="9" fill="#f9d48a" stroke="#e8b04a" stroke-width="1"/><rect x="1.5" y="13.5" width="9" height="9.5" fill="#b4b4b4" stroke="#7a7a7a" stroke-width="1"/><rect x="13.5" y="13.5" width="9.5" height="9.5" fill="#86c986" stroke="#4aa54a" stroke-width="1"/></svg>
<svg class="a" style="left:944px;top:73px;" width="26" height="22" viewBox="0 0 26 22"><rect x="1.5" y="1.5" width="23" height="18.5" fill="none" stroke="#444" stroke-width="1.5"/><rect x="1.5" y="1.5" width="23" height="4" fill="#777"/><path d="M1.5 10.5 H24.5 M1.5 15.2 H24.5 M9 5.5 V20 M17 5.5 V20" stroke="#444" stroke-width="1.4" fill="none"/></svg>
<svg class="a" style="left:1112px;top:72px;" width="26" height="26" viewBox="0 0 26 26"><path d="M13 1.8 H2.2 V23.5 H9" fill="none" stroke="#333" stroke-width="1.5"/><path d="M13 1.8 L19 7.8 V10 M13 1.8 V7.8 H19" fill="none" stroke="#333" stroke-width="1.5"/><path d="M5.5 11 H15 M5.5 14.5 H13 M5.5 18 H11" stroke="#555" stroke-width="1.2"/><path d="M11.5 23.5 L13 19.5 L20.5 12.2 a1.7 1.7 0 0 1 2.6 2.4 L15.5 22 Z" fill="#4fc0c0" stroke="#1e9aa0" stroke-width="1.3" stroke-linejoin="round"/></svg>
<svg class="a" style="left:1264px;top:75px;" width="26" height="20" viewBox="0 0 26 20"><rect x="1.5" y="1.5" width="23" height="16.5" fill="#fafafa" stroke="#333" stroke-width="1.5"/><path d="M2.2 17.3 L2.2 13 L8.5 7 L14.5 13 L17.5 10.5 L23.8 16.5 V17.3 Z" fill="#5cc5c0"/><circle cx="19.5" cy="5.8" r="1" fill="#f0a030"/></svg>
<svg class="a" style="left:1419px;top:72px;" width="24" height="26" viewBox="0 0 24 26"><path d="M2 2 V22.5 H22.5" fill="none" stroke="#444" stroke-width="1.5"/><rect x="5" y="8" width="3.6" height="12.5" fill="#5cc5c8" stroke="#1e9aa0" stroke-width="1.1"/><rect x="10.5" y="11.5" width="3.6" height="9" fill="#fbd28a" stroke="#f0a830" stroke-width="1.1"/><rect x="16" y="4.5" width="3.6" height="16" fill="#9ad49a" stroke="#3a9a4a" stroke-width="1.1"/></svg>
<svg class="a" style="left:1573px;top:72px;" width="28" height="26" viewBox="0 0 28 26"><circle cx="6.5" cy="6.5" r="4.3" fill="none" stroke="#333" stroke-width="1.5"/><path d="M3.5 3.5 L9.5 9.5" stroke="#333" stroke-width="1.5"/><path d="M19.8 10.5 L15.6 6.2 a2.4 2.4 0 0 1 4.2 -2 a2.4 2.4 0 0 1 4.2 2 Z" fill="none" stroke="#e8502a" stroke-width="1.4" stroke-linejoin="round"/><path d="M6 14.5 V24 M1.2 19.3 H10.8" stroke="#2a9a3a" stroke-width="1.7" fill="none"/><path d="M15 18.5 a5 4.3 0 0 1 9 -2 M24.5 13.5 V17 H21" fill="none" stroke="#333" stroke-width="1.6"/><path d="M24.5 20 a5 4.3 0 0 1 -9 2 M15 25 V21.5 H18.5" fill="none" stroke="#333" stroke-width="1.6"/></svg>
<svg class="a" style="left:1719px;top:72px;" width="26" height="25" viewBox="0 0 26 25"><g fill="none" stroke="#222" stroke-width="1.6"><rect x="1.8" y="5.5" width="9" height="8.8"/><rect x="1.8" y="14.3" width="9" height="8.8"/><rect x="10.8" y="14.3" width="9" height="8.8"/><rect x="15.5" y="1.8" width="7.5" height="7.5"/></g></svg>
<svg class="a" style="left:1884px;top:72px;" width="26" height="26" viewBox="0 0 26 26"><path d="M2.5 2.5 L22.5 10.5 V24 L2.5 16 Z" fill="none" stroke="#333" stroke-width="1.5" stroke-linejoin="round"/><path d="M6 10.5 L11.5 8 L17 10.5 V17.5 L11.5 20.5 L6 17.5 Z M6 10.5 L11.5 13.2 L17 10.5 M11.5 13.2 V20.5" fill="none" stroke="#2e8fd8" stroke-width="1.4" stroke-linejoin="round"/></svg>
<div class="a" style="left:0px;top:116px;width:2199px;height:65px;background:#f0f0f0;border-bottom:1px solid #d8d8d8;"></div>
<div class="a" style="left:26.5px;top:125px;width:407.5px;height:48px;background:#fff;border:1px solid #c8c8c8;"></div>
<span class="t" style="left:39.09px;top:138.00px;font-family:'Liberation Sans', sans-serif;font-size:21px;font-weight:400;color:#555;letter-spacing:0.000px;transform:scaleX(0.9150);transform-origin:0 0;">OnSelect</span>
<svg class="a" style="left:413px;top:144px;" width="17" height="10" viewBox="0 0 17 10"><path d="M1 1 L8.2 8 L15.4 1" fill="none" stroke="#333" stroke-width="1.3"/></svg>
<div class="a" style="left:454.8px;top:147px;width:17.3px;height:2.6px;background:#111;"></div>
<div class="a" style="left:454.8px;top:153.6px;width:17.3px;height:2.6px;background:#111;"></div>
<div class="a" style="left:491px;top:124px;width:91px;height:47.5px;background:#f4f4f4;border:1px solid #d0d0d0;"></div>
<span class="t" style="left:515.68px;top:132.00px;font-family:'Liberation Serif', serif;font-size:28.5px;font-weight:400;color:#111;letter-spacing:0.000px;font-style:italic;-webkit-text-stroke:0.4px #111;">fx</span>
<svg class="a" style="left:545px;top:143px;" width="15" height="9" viewBox="0 0 15 9"><path d="M1 1 L7.2 7 L13.4 1" fill="none" stroke="#333" stroke-width="1.2"/></svg>
<div class="a" style="left:581px;top:124px;width:1556px;height:47.5px;background:#fff;border:1px solid #d0d0d0;"></div>
<div class="a" style="left:590px;top:133px;width:617.5px;height:30px;background:#add6ff;border-radius:3px;"></div>
<div class="a" style="left:698px;top:133px;width:105px;height:33.5px;background:#98c9dc;border-bottom:3px solid #0f7d22;border-radius:3px 3px 7px 7px;"></div>
<span class="t" style="left:590.00px;top:139.00px;font-family:'Liberation Mono', monospace;font-size:22px;font-weight:400;color:#2f5a9c;letter-spacing:0.000px;transform:scaleX(0.9351);transform-origin:0 0;-webkit-text-stroke:0.3px #2f5a9c;">Navigate</span>
<span class="t" style="left:688.76px;top:139.00px;font-family:'Liberation Mono', monospace;font-size:22px;font-weight:400;color:#222;letter-spacing:0.000px;transform:scaleX(0.9351);transform-origin:0 0;-webkit-text-stroke:0.3px #222;">(</span>
<span class="t" style="left:701.11px;top:139.00px;font-family:'Liberation Mono', monospace;font-size:22px;font-weight:400;color:#722d6c;letter-spacing:0.000px;font-style:italic;transform:scaleX(0.9351);transform-origin:0 0;-webkit-text-stroke:0.3px #722d6c;">Products</span>
<span class="t" style="left:799.87px;top:139.00px;font-family:'Liberation Mono', monospace;font-size:22px;font-weight:400;color:#6a6a6a;letter-spacing:0.000px;transform:scaleX(0.9351);transform-origin:0 0;-webkit-text-stroke:0.3px #6a6a6a;">,</span>
<span class="t" style="left:812.21px;top:139.00px;font-family:'Liberation Mono', monospace;font-size:22px;font-weight:400;color:#15858a;letter-spacing:0.000px;transform:scaleX(0.9351);transform-origin:0 0;-webkit-text-stroke:0.3px #15858a;">ScreenTransition</span>
<span class="t" style="left:1009.73px;top:139.00px;font-family:'Liberation Mono', monospace;font-size:22px;font-weight:400;color:#b5602a;letter-spacing:0.000px;transform:scaleX(0.9351);transform-origin:0 0;-webkit-text-stroke:0.3px #b5602a;">.</span>
<span class="t" style="left:1022.08px;top:139.00px;font-family:'Liberation Mono', monospace;font-size:22px;font-weight:400;color:#333;letter-spacing:0.000px;transform:scaleX(0.9351);transform-origin:0 0;-webkit-text-stroke:0.3px #333;">Cover</span>
<span class="t" style="left:1083.80px;top:139.00px;font-family:'Liberation Mono', monospace;font-size:22px;font-weight:400;color:#b5602a;letter-spacing:0.000px;transform:scaleX(0.9351);transform-origin:0 0;-webkit-text-stroke:0.3px #b5602a;">,</span>
<span class="t" style="left:1096.14px;top:139.00px;font-family:'Liberation Mono', monospace;font-size:22px;font-weight:400;color:#333;letter-spacing:0.000px;transform:scaleX(0.9351);transform-origin:0 0;-webkit-text-stroke:0.3px #333;"> </span>
<span class="t" style="left:1108.49px;top:139.00px;font-family:'Liberation Mono', monospace;font-size:22px;font-weight:400;color:#222;letter-spacing:0.000px;transform:scaleX(0.9351);transform-origin:0 0;-webkit-text-stroke:0.3px #222;">{ID:</span>
<span class="t" style="left:1157.87px;top:139.00px;font-family:'Liberation Mono', monospace;font-size:22px;font-weight:400;color:#c2551a;letter-spacing:0.000px;transform:scaleX(0.9351);transform-origin:0 0;-webkit-text-stroke:0.3px #c2551a;">1</span>
<span class="t" style="left:1170.22px;top:139.00px;font-family:'Liberation Mono', monospace;font-size:22px;font-weight:400;color:#222;letter-spacing:0.000px;transform:scaleX(0.9351);transform-origin:0 0;-webkit-text-stroke:0.3px #222;">});</span>
<svg class="a" style="left:2152px;top:139px;" width="32" height="19" viewBox="0 0 32 19"><path d="M1.5 1.5 L15.5 15.5 L29.5 1.5" fill="none" stroke="#222" stroke-width="1.7"/></svg>
<div class="a" style="left:581px;top:171px;width:1556px;height:50px;background:#f5f5f5;border:1px solid #cfcfcf;"></div>
<span class="t" style="left:602.64px;top:188.00px;font-family:'Liberation Sans', sans-serif;font-size:21.5px;font-weight:400;color:#222;letter-spacing:0.000px;transform:scaleX(0.9411);transform-origin:0 0;">Navigate(Products,ScreenTransition.Cover, {ID:1});</span>
<span class="t" style="left:1070.45px;top:188.00px;font-family:'Liberation Sans', sans-serif;font-size:21.5px;font-weight:400;color:#222;letter-spacing:0.000px;">=</span>
<span class="t" style="left:1096.53px;top:188.00px;font-family:'Liberation Sans', sans-serif;font-size:21.5px;font-weight:400;color:#222;letter-spacing:0.000px;transform:scaleX(0.9648);transform-origin:0 0;">This formula has side effects and cannot be evaluated.</span>
<div class="a" style="left:1620px;top:173px;width:1px;height:45px;background:#cfcfcf;"></div>
<span class="t" style="left:1642.67px;top:188.00px;font-family:'Liberation Sans', sans-serif;font-size:21.5px;font-weight:400;color:#222;letter-spacing:0.000px;transform:scaleX(0.9801);transform-origin:0 0;">Data type:</span>
<span class="t" style="left:1742.91px;top:188.00px;font-family:'Liberation Sans', sans-serif;font-size:21.5px;font-weight:700;color:#000;letter-spacing:0.000px;transform:scaleX(0.9790);transform-origin:0 0;">boolean</span>
<div class="a" style="left:26.5px;top:173.5px;width:410.5px;height:617.5px;background:#fff;border:1px solid #c6c6c6;"></div>
<div class="a" style="left:411px;top:174.5px;width:25px;height:615.5px;background:#f1f1f1;"></div>
<div class="a" style="left:413px;top:421px;width:21px;height:115.5px;background:#c1c1c1;"></div>
<svg class="a" style="left:416px;top:182px;" width="15" height="10" viewBox="0 0 15 10"><path d="M1.5 8 L7 1.8 L12.5 8 Z" fill="#505050"/></svg>
<svg class="a" style="left:416px;top:771px;" width="15" height="10" viewBox="0 0 15 10"><path d="M1.8 1.7 L7.5 8.3 L13.3 1.7 Z" fill="#505050"/></svg>
<div class="a" style="left:27.5px;top:426px;width:383.5px;height:67.5px;background:#cccccc;"></div>
<span class="t" style="left:36.15px;top:178.00px;font-family:'Liberation Sans', sans-serif;font-size:22.5px;font-weight:400;color:#505050;letter-spacing:0.026px;">HoverBorderColor</span>
<span class="t" style="left:36.15px;top:246.00px;font-family:'Liberation Sans', sans-serif;font-size:22.5px;font-weight:400;color:#505050;letter-spacing:0.158px;">HoverColor</span>
<span class="t" style="left:36.15px;top:314.00px;font-family:'Liberation Sans', sans-serif;font-size:22.5px;font-weight:400;color:#505050;letter-spacing:0.073px;">HoverFill</span>
<span class="t" style="left:35.92px;top:382.00px;font-family:'Liberation Sans', sans-serif;font-size:22.5px;font-weight:400;color:#505050;letter-spacing:0.481px;">Italic</span>
<span class="t" style="left:37.11px;top:450.00px;font-family:'Liberation Sans', sans-serif;font-size:22.5px;font-weight:700;color:#555;letter-spacing:0.000px;transform:scaleX(0.9652);transform-origin:0 0;">OnSelect</span>
<span class="t" style="left:36.15px;top:518.00px;font-family:'Liberation Sans', sans-serif;font-size:22.5px;font-weight:400;color:#505050;letter-spacing:0.372px;">PaddingBottom</span>
<span class="t" style="left:36.16px;top:586.00px;font-family:'Liberation Sans', sans-serif;font-size:22.5px;font-weight:400;color:#505050;letter-spacing:0.000px;transform:scaleX(0.9949);transform-origin:0 0;">PaddingLeft</span>
<span class="t" style="left:36.16px;top:654.00px;font-family:'Liberation Sans', sans-serif;font-size:22.5px;font-weight:400;color:#505050;letter-spacing:0.000px;transform:scaleX(0.9993);transform-origin:0 0;">PaddingRight</span>
<span class="t" style="left:36.15px;top:722.00px;font-family:'Liberation Sans', sans-serif;font-size:22.5px;font-weight:400;color:#505050;letter-spacing:0.048px;">PaddingTop</span>
</body></html>
